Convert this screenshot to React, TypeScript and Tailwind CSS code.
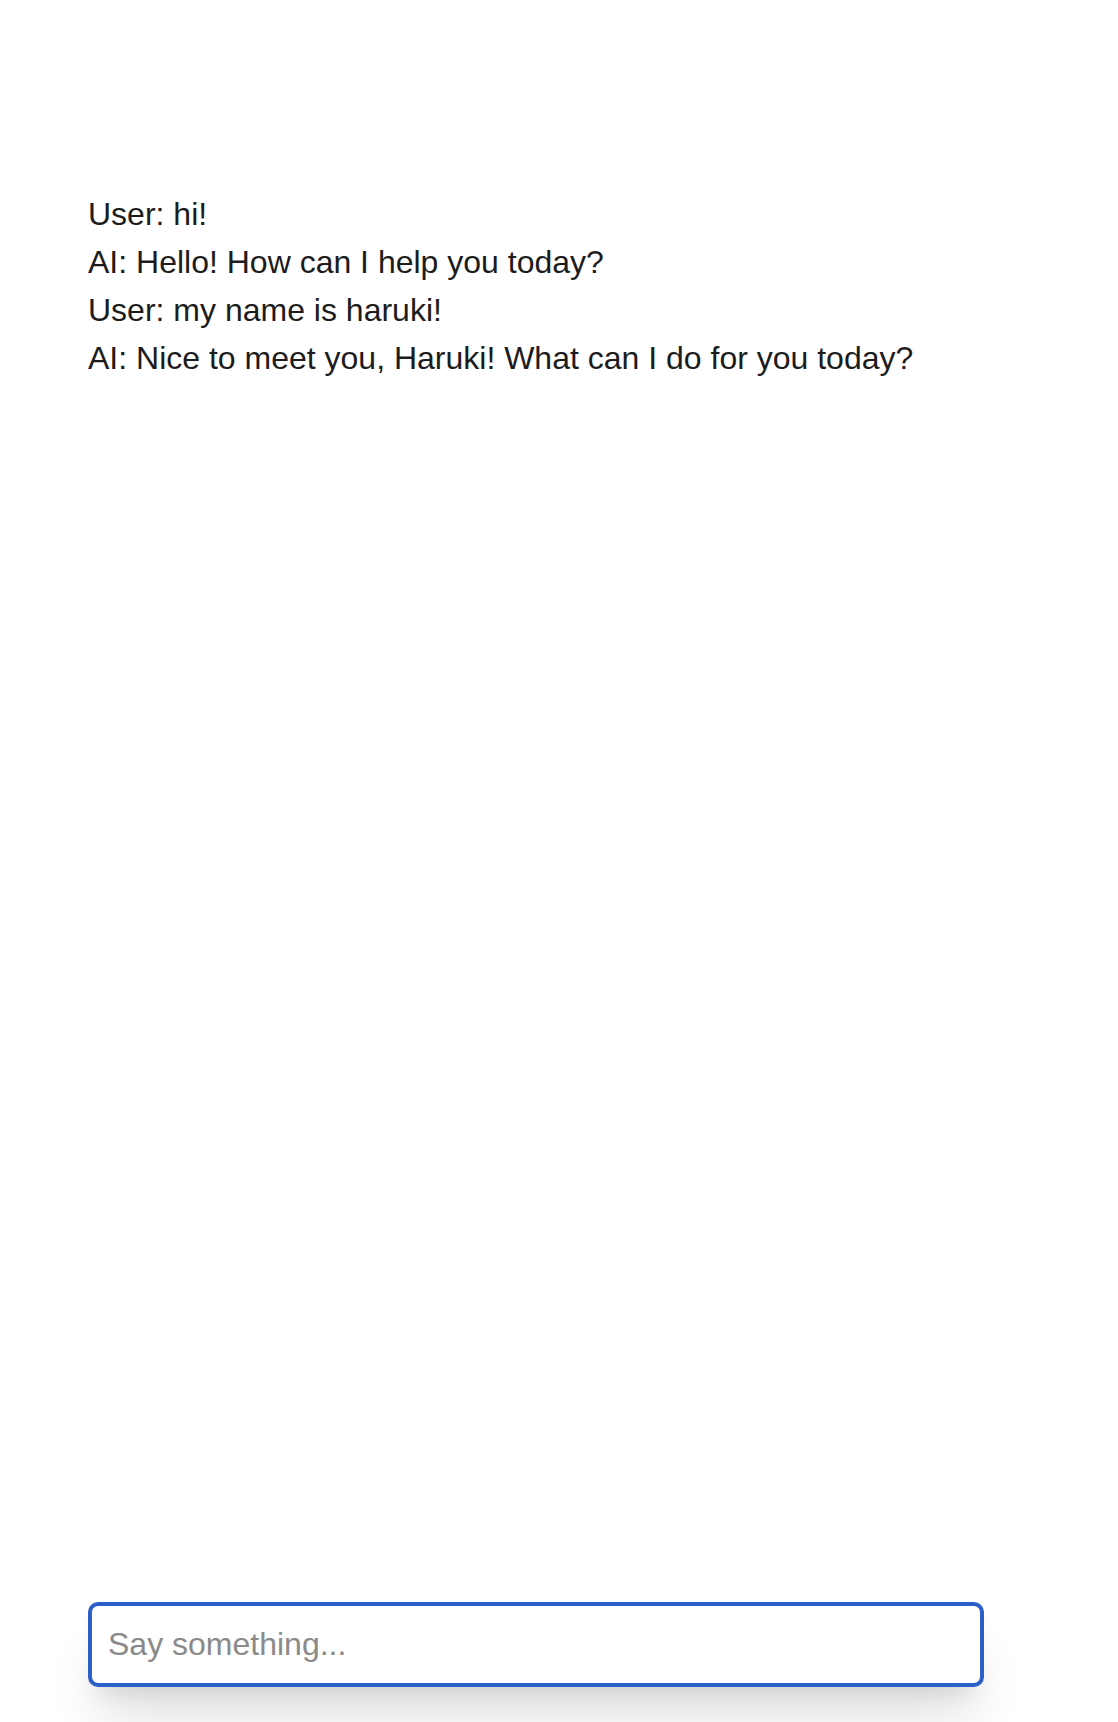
const messages = [
  { role: "User", content: "hi!" },
  { role: "AI", content: "Hello! How can I help you today?" },
  { role: "User", content: "my name is haruki!" },
  { role: "AI", content: "Nice to meet you, Haruki! What can I do for you today?" }
];

export default function App() {
  return (
    <div className="h-[1722px] w-full bg-white font-['Liberation_Sans',Arial,sans-serif] text-[#1c1c1c]">
      <div className="flex flex-col h-full w-[896px] ml-[88px] pt-[190px]">
        {messages.map((m, i) => (
          <div key={i} className="whitespace-pre-wrap text-[32px] leading-[48px]">
            {m.role}: {m.content}
          </div>
        ))}

        <form className="mt-auto mb-[35px]">
          <input
            className="w-full h-[85px] px-[16px] text-[32px] bg-white border-[4px] border-[#2c60c8] rounded-[10px] outline-none placeholder:text-[#8a8a8a] shadow-[0_40px_50px_-10px_rgba(0,0,0,0.12),0_16px_20px_-12px_rgba(0,0,0,0.1)]"
            placeholder="Say something..."
          />
        </form>
      </div>
    </div>
  );
}
